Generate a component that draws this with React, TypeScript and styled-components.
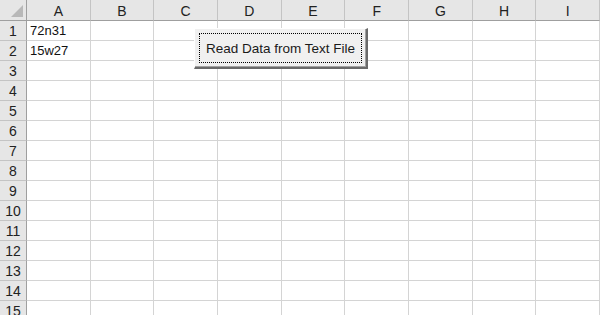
import styled, { createGlobalStyle } from 'styled-components'

const COLUMNS = ['A', 'B', 'C', 'D', 'E', 'F', 'G', 'H', 'I']
const ROWS = Array.from({ length: 15 }, (_, i) => i + 1)
const DATA: Record<string, string> = { A1: '72n31', A2: '15w27' }

export default function App() {
  return (
    <>
      <GlobalStyle />
      <Sheet>
        <Grid>
          <Corner>
            <CornerTriangle />
          </Corner>
          {COLUMNS.map((c) => (
            <ColHeader key={c}>{c}</ColHeader>
          ))}
          {ROWS.map((r) => (
            <RowGroup key={r}>
              <RowHeader>{r}</RowHeader>
              {COLUMNS.map((c) => (
                <Cell key={c}>{DATA[`${c}${r}`] ?? ''}</Cell>
              ))}
            </RowGroup>
          ))}
        </Grid>
        <Button>
          <FocusRing>Read Data from Text File</FocusRing>
        </Button>
      </Sheet>
    </>
  )
}

const GlobalStyle = createGlobalStyle`
  html, body {
    margin: 0;
    padding: 0;
    background: #ffffff;
  }
`

const Sheet = styled.div`
  position: relative;
  width: 600px;
  height: 315px;
  overflow: hidden;
  background: #ffffff;
  font-family: 'Liberation Sans', Arial, sans-serif;
`

const Grid = styled.div`
  display: grid;
  grid-template-columns: 27px repeat(9, 1fr);
  grid-auto-rows: 20px;
  grid-template-rows: 21px;
  width: 600px;
`

const RowGroup = styled.div`
  display: contents;
`

const Corner = styled.div`
  position: relative;
  background: #e6e6e6;
  border-right: 1px solid #9f9f9f;
  border-bottom: 1px solid #9f9f9f;
`

const CornerTriangle = styled.div`
  position: absolute;
  right: 3px;
  bottom: 3px;
  width: 0;
  height: 0;
  border-left: 12px solid transparent;
  border-bottom: 12px solid #b8b8b8;
`

const ColHeader = styled.div`
  display: flex;
  align-items: center;
  justify-content: center;
  background: #e6e6e6;
  border-right: 1px solid #c4c4c4;
  border-bottom: 1px solid #9f9f9f;
  font-size: 14px;
  color: #222222;
  padding-top: 1px;
`

const RowHeader = styled.div`
  display: flex;
  align-items: center;
  justify-content: center;
  background: #e6e6e6;
  border-right: 1px solid #9f9f9f;
  border-bottom: 1px solid #c4c4c4;
  font-size: 14px;
  color: #222222;
`

const Cell = styled.div`
  display: flex;
  align-items: center;
  padding-left: 3px;
  border-right: 1px solid #d4d4d4;
  border-bottom: 1px solid #d4d4d4;
  font-size: 13px;
  color: #111111;
  white-space: nowrap;
`

const Button = styled.div`
  position: absolute;
  left: 194px;
  top: 28px;
  width: 174px;
  height: 41px;
  box-sizing: border-box;
  padding: 4px;
  background: #f0f0f0;
  border-top: 1px solid #ffffff;
  border-left: 1px solid #ffffff;
  border-right: 2px solid #6a6a6a;
  border-bottom: 2px solid #6a6a6a;
  box-shadow: inset -1px -1px 0 #a0a0a0;
`

const FocusRing = styled.div`
  display: flex;
  align-items: center;
  justify-content: center;
  height: 100%;
  box-sizing: border-box;
  border: 1px dotted #000000;
  font-size: 13.5px;
  color: #1a1a1a;
`
